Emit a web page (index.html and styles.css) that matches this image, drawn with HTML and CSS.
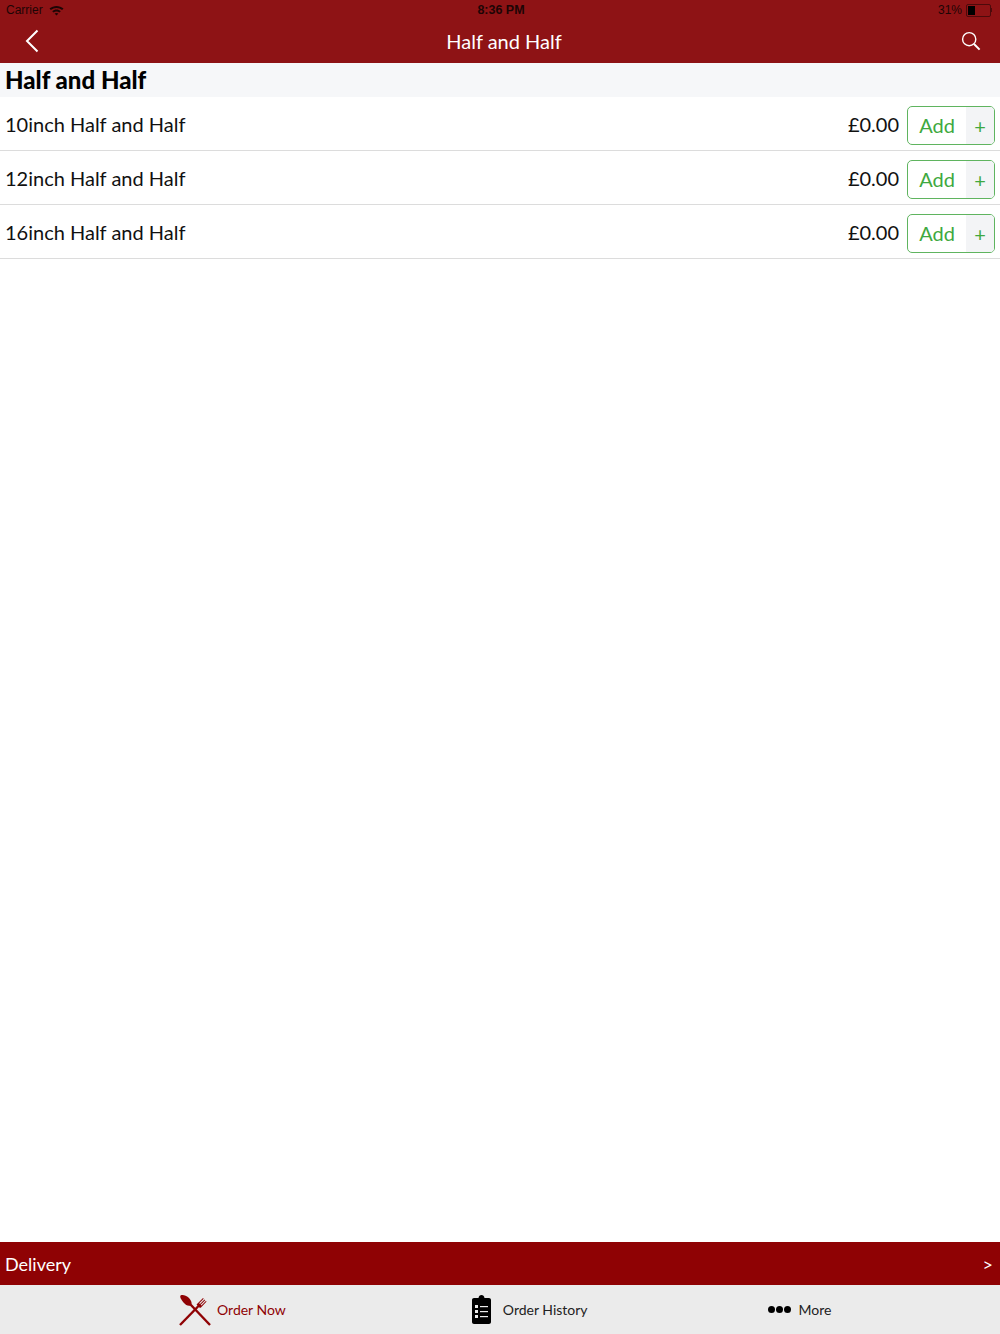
FILE: index.html
```html
<!DOCTYPE html>
<html lang="en">
<head>
    <meta charset="UTF-8">
    <meta name="viewport" content="width=device-width, initial-scale=1.0">
    <title>Half and Half</title>
    <link rel="stylesheet" href="styles.css">
</head>
<body>
    <div class="page">
        <header class="header">
            <div class="status-bar">
                <div class="status-left">
                    <span>Carrier</span>
                    <svg class="wifi" width="15" height="11" viewBox="0 0 15 11">
                        <path d="M0.5 3.6C4.4 0 10.6 0 14.5 3.6L13.1 5C10 2.2 5 2.2 1.9 5Z"/>
                        <path d="M3.2 6.2C5.6 4 9.4 4 11.8 6.2L10.4 7.6C8.7 6.1 6.3 6.1 4.6 7.6Z"/>
                        <path d="M5.6 8.6C6.7 7.7 8.3 7.7 9.4 8.6L7.5 10.6Z"/>
                    </svg>
                </div>
                <span class="status-time">8:36 PM</span>
                <div class="status-right">
                    <span>31%</span>
                    <div class="battery"><div class="battery-level"></div></div>
                    <div class="battery-tip"></div>
                </div>
            </div>
            <div class="nav-bar">
                <svg class="back-icon" width="14" height="24" viewBox="0 0 14 24">
                    <path d="M12.5 1.5L2 12L12.5 22.5"/>
                </svg>
                <span class="nav-title">Half and Half</span>
                <svg class="search-icon" width="20" height="20" viewBox="0 0 20 20">
                    <circle cx="8.2" cy="8.2" r="6.6"/>
                    <path d="M13 13L18.6 18.6"/>
                </svg>
            </div>
        </header>

        <h1 class="section-title">Half and Half</h1>

        <main class="items">
            <div class="item">
                <span class="item-name">10inch Half and Half</span>
                <span class="item-price">£0.00</span>
                <button class="add-btn"><span class="add-label">Add</span><span class="add-plus">+</span></button>
            </div>
            <div class="item">
                <span class="item-name">12inch Half and Half</span>
                <span class="item-price">£0.00</span>
                <button class="add-btn"><span class="add-label">Add</span><span class="add-plus">+</span></button>
            </div>
            <div class="item">
                <span class="item-name">16inch Half and Half</span>
                <span class="item-price">£0.00</span>
                <button class="add-btn"><span class="add-label">Add</span><span class="add-plus">+</span></button>
            </div>
        </main>

        <div class="delivery-bar">
            <span>Delivery</span>
            <span class="delivery-arrow">&gt;</span>
        </div>

        <nav class="tab-bar">
            <div class="tab tab-order active">
                <svg width="32" height="32" viewBox="0 0 32 32">
                    <path class="cutlery-line" d="M1 31L20 11.5"/>
                    <path class="cutlery-line" d="M31 31L11 10"/>
                    <path class="cutlery-fill" d="M1.5 1.5C5 0 9.5 2.5 11.5 6C13 8.5 13 10.500 11.500 11.500C9.500 12.500 6.500 11 4.500 8.500C2.500 6 0.500 3 1.500 1.500Z"/>
                    <path class="cutlery-fill" d="M19 12L17.500 10.500L24 4L24.700 4.700L20.200 9.200L21 10L25.500 5.500L26.200 6.200L21.700 10.700L22.400 11.400L26.900 6.900L27.600 7.600L22 13.500C21 14.500 20 13 19 12Z"/>
                </svg>
                <span>Order Now</span>
            </div>
            <div class="tab tab-history">
                <svg width="19" height="29" viewBox="0 0 19 29">
                    <path d="M2 3H6.500C6.700 1 8 0 9.500 0C11 0 12.300 1 12.500 3H17C18.100 3 19 3.900 19 5V27C19 28.100 18.100 29 17 29H2C0.900 29 0 28.100 0 27V5C0 3.900 0.900 3 2 3Z"/>
                    <g class="clip-marks">
                        <rect x="3" y="10" width="3" height="3"/>
                        <rect x="8" y="11" width="8" height="1.200"/>
                        <rect x="3" y="15" width="3" height="3"/>
                        <rect x="8" y="16" width="8" height="1.200"/>
                        <rect x="3" y="20" width="3" height="3"/>
                        <rect x="8" y="21" width="8" height="1.200"/>
                    </g>
                </svg>
                <span>Order History</span>
            </div>
            <div class="tab tab-more">
                <div class="dots"><i></i><i></i><i></i></div>
                <span>More</span>
            </div>
        </nav>
    </div>
</body>
</html>
```

FILE: styles.css
```css
body {
    margin: 0;
    font-family: Lato, "Open Sans", sans-serif;
    background-color: #fff;
}

.page {
    display: flex;
    flex-direction: column;
    height: 1334px;
}

.header {
    background-color: #8e1315;
    height: 63px;
}

.status-bar {
    display: grid;
    grid-template-columns: 1fr auto 1fr;
    align-items: center;
    height: 20px;
    padding: 0 8px 0 6px;
    font-family: "Liberation Sans", sans-serif;
    font-size: 12px;
    color: #1d0505;
}

.status-left {
    display: flex;
    align-items: center;
    gap: 6px;
}

.status-time {
    font-weight: bold;
    font-size: 12.5px;
    padding-left: 4px;
}

.wifi {
    fill: #1d0505;
}

.status-right {
    display: flex;
    align-items: center;
    justify-content: flex-end;
    gap: 4px;
}

.battery {
    width: 21px;
    height: 9px;
    border: 1px solid #4d0a0b;
    border-radius: 2px;
    padding: 1px;
}

.battery-level {
    width: 7px;
    height: 100%;
    background-color: #000;
}

.battery-tip {
    width: 1px;
    height: 4px;
    margin-left: -4px;
    background-color: #4d0a0b;
}

.nav-bar {
    display: flex;
    align-items: center;
    justify-content: space-between;
    height: 41px;
    padding: 0 19px 0 25px;
}

.back-icon path {
    fill: none;
    stroke: #fff;
    stroke-width: 2;
}

.search-icon circle,
.search-icon path {
    fill: none;
    stroke: #fff;
    stroke-width: 1.400;
}

.search-icon path {
    stroke-width: 2;
}

.nav-title {
    font-size: 20px;
    color: #fff;
    margin-left: 8px;
}

.section-title {
    margin: 0;
    height: 34px;
    line-height: 33px;
    padding-left: 5px;
    font-size: 24px;
    font-weight: 900;
    color: #000;
    background-color: #f6f7f9;
}

.items {
    flex: 1;
}

.item {
    display: flex;
    align-items: center;
    height: 53px;
    padding-right: 5px;
    border-bottom: 1px solid #dcdcdc;
}

.item-name {
    flex: 1;
    padding-left: 5px;
    font-size: 20px;
    color: #111;
}

.item-price {
    font-size: 20px;
    color: #111;
    margin-right: 8px;
}

.add-btn {
    display: flex;
    width: 88px;
    height: 39px;
    margin-top: 3px;
    padding: 0;
    overflow: hidden;
    font-family: inherit;
    background-color: #fff;
    border: 1px solid #5fb45f;
    border-radius: 5px;
}

.add-label {
    flex: 1;
    line-height: 37px;
    font-size: 20px;
    color: #3fa93f;
}

.add-plus {
    width: 28px;
    line-height: 39px;
    font-size: 20px;
    color: #3fa93f;
    background-color: #f3f4f6;
}

.delivery-bar {
    display: flex;
    align-items: center;
    justify-content: space-between;
    height: 43px;
    padding: 0 7px 0 5px;
    font-size: 18px;
    color: #fff;
    background-color: #8f0204;
}

.tab-bar {
    position: relative;
    display: flex;
    align-items: center;
    height: 49px;
    font-size: 14px;
    color: #222;
    background-color: #ebebeb;
}

.tab {
    display: flex;
    align-items: center;
}

.tab-order {
    margin-left: 179px;
    gap: 6px;
}

.tab-history {
    margin-left: 186px;
    gap: 12px;
}

.tab-more {
    margin-left: 180px;
    gap: 8px;
}

.active {
    color: #8f0204;
}

.cutlery-line {
    fill: none;
    stroke: #8f0204;
    stroke-width: 2.400;
}

.cutlery-fill {
    fill: #8f0204;
}

.tab-history svg {
    fill: #000;
}

.clip-marks rect {
    fill: #ebebeb;
}

.dots {
    display: flex;
    gap: 1px;
}

.dots i {
    width: 7px;
    height: 7px;
    border-radius: 50%;
    background-color: #000;
}
```
